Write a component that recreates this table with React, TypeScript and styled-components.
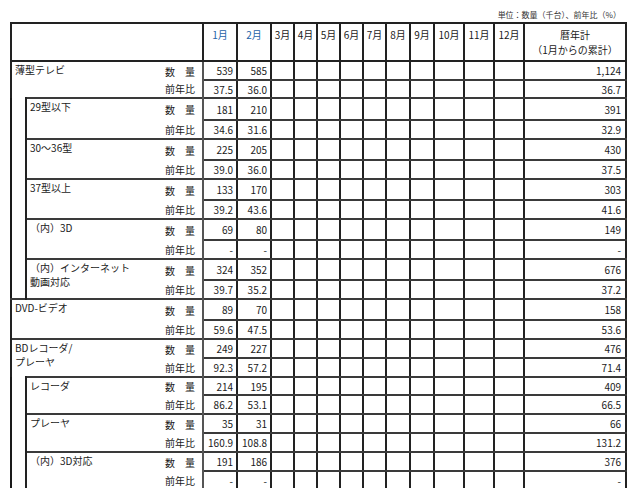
import React from "react";
import styled, { createGlobalStyle } from "styled-components";

const Global = createGlobalStyle`
  html, body { margin: 0; padding: 0; background: #fff; overflow: hidden; }
  body { font-family: "Noto Sans CJK JP", "Noto Sans", sans-serif; color: #1a1a1a; }
`;

const Page = styled.div`
  padding-left: 10px;
  width: 615px;
`;

const UnitNote = styled.div`
  height: 22px;
  display: flex;
  align-items: flex-end;
  justify-content: flex-end;
  padding-right: 4px;
  box-sizing: border-box;
  padding-bottom: 3px;
  font-size: 8px;
  line-height: 9px;
  color: #333;
`;

const Sheet = styled.table`
  width: 615px;
  table-layout: fixed;
  border-collapse: collapse;
  border: 2px solid #1a1a1a;
  font-size: 10px;
`;

const line = "2px solid #3a3a3a";
const vline = "2px solid #222";

const HeadCell = styled.th<{ $blue?: boolean }>`
  border: ${vline};
  padding: 3px 0 0;
  vertical-align: top;
  font-weight: normal;
  line-height: 15px;
  text-align: center;
  white-space: nowrap;
  color: ${(p) => (p.$blue ? "#2563a8" : "#1a1a1a")};
`;

const IndentCell = styled.td`
  border-top: none;
  border-bottom: none;
  border-right: ${vline};
  padding: 0;
`;

const NameCell = styled.td`
  border-top: ${line};
  border-bottom: none;
  border-left: ${vline};
  border-right: none;
  vertical-align: top;
  padding: 1px 0 0 3px;
  line-height: 14px;
  white-space: nowrap;
`;

const KindCell = styled.td<{ $first: boolean }>`
  border-top: ${(p) => (p.$first ? line : "none")};
  border-bottom: none;
  border-left: none;
  border-right: 2px solid #555;
  text-align: right;
  padding: 0 7px 0 0;
  white-space: nowrap;
`;

const NumCell = styled.td`
  border-top: ${line};
  border-bottom: ${line};
  border-left: ${vline};
  border-right: ${vline};
  text-align: right;
  padding: 0 3px 0 0;
  white-space: nowrap;
`;

const TotalCell = styled(NumCell)`
  padding-right: 4px;
`;

type Item = {
  name: string[];
  q: [string, string];
  r: [string, string];
  total: [string, string];
  subs?: Item[];
};

const sections: Item[] = [
  {
    name: ["薄型テレビ"],
    q: ["539", "585"],
    r: ["37.5", "36.0"],
    total: ["1,124", "36.7"],
    subs: [
      { name: ["29型以下"], q: ["181", "210"], r: ["34.6", "31.6"], total: ["391", "32.9"] },
      { name: ["30～36型"], q: ["225", "205"], r: ["39.0", "36.0"], total: ["430", "37.5"] },
      { name: ["37型以上"], q: ["133", "170"], r: ["39.2", "43.6"], total: ["303", "41.6"] },
      { name: ["（内）3D"], q: ["69", "80"], r: ["-", "-"], total: ["149", "-"] },
      {
        name: ["（内）インターネット", "動画対応"],
        q: ["324", "352"],
        r: ["39.7", "35.2"],
        total: ["676", "37.2"],
      },
    ],
  },
  { name: ["DVD-ビデオ"], q: ["89", "70"], r: ["59.6", "47.5"], total: ["158", "53.6"] },
  {
    name: ["BDレコーダ/", "プレーヤ"],
    q: ["249", "227"],
    r: ["92.3", "57.2"],
    total: ["476", "71.4"],
    subs: [
      { name: ["レコーダ"], q: ["214", "195"], r: ["86.2", "53.1"], total: ["409", "66.5"] },
      { name: ["プレーヤ"], q: ["35", "31"], r: ["160.9", "108.8"], total: ["66", "131.2"] },
      { name: ["（内）3D対応"], q: ["191", "186"], r: ["-", "-"], total: ["376", "-"] },
    ],
  },
];

const heights = [19, 18, 22, 19, 21, 19, 21, 19, 21, 19, 21, 19, 21, 19, 19, 19, 18, 19, 19, 19, 19, 19];

const months = ["1月", "2月", "3月", "4月", "5月", "6月", "7月", "8月", "9月", "10月", "11月", "12月"];
const widths = [34, 34, 23, 23, 23, 23, 23, 24, 24, 30, 30, 30];

const Name = ({ lines }: { lines: string[] }) => (
  <>
    {lines.map((l, i) => (
      <React.Fragment key={i}>
        {i > 0 && <br />}
        {l}
      </React.Fragment>
    ))}
  </>
);

export default function App() {
  let rowIndex = 0;
  const rows: React.ReactNode[] = [];

  const pushItem = (item: Item, sub: boolean, indentSpan: number) => {
    const h1 = heights[rowIndex++] ?? 19;
    const h2 = heights[rowIndex++] ?? 19;
    const key = item.name.join("");
    rows.push(
      <tr key={key + "q"} style={{ height: h1 }}>
        {indentSpan > 0 && <IndentCell rowSpan={indentSpan} />}
        <NameCell rowSpan={2} colSpan={sub ? 1 : 2}>
          <Name lines={item.name} />
        </NameCell>
        <KindCell $first>数　量</KindCell>
        <NumCell>{item.q[0]}</NumCell>
        <NumCell>{item.q[1]}</NumCell>
        {months.slice(2).map((m) => (
          <NumCell key={m} />
        ))}
        <TotalCell>{item.total[0]}</TotalCell>
      </tr>
    );
    rows.push(
      <tr key={key + "r"} style={{ height: h2 }}>
        <KindCell $first={false}>前年比</KindCell>
        <NumCell>{item.r[0]}</NumCell>
        <NumCell>{item.r[1]}</NumCell>
        {months.slice(2).map((m) => (
          <NumCell key={m} />
        ))}
        <TotalCell>{item.total[1]}</TotalCell>
      </tr>
    );
  };

  sections.forEach((s) => {
    pushItem(s, false, 0);
    (s.subs ?? []).forEach((c, i) => {
      pushItem(c, true, i === 0 ? s.subs!.length * 2 : 0);
    });
  });

  return (
    <Page>
      <Global />
      <UnitNote>単位：数量（千台）、前年比（%）</UnitNote>
      <Sheet>
        <colgroup>
          <col style={{ width: 15 }} />
          <col style={{ width: 125 }} />
          <col style={{ width: 52 }} />
          {widths.map((w, i) => (
            <col key={i} style={{ width: w }} />
          ))}
          <col style={{ width: 102 }} />
        </colgroup>
        <thead>
          <tr style={{ height: 38 }}>
            <HeadCell colSpan={3} />
            {months.map((m, i) => (
              <HeadCell key={m} $blue={i < 2}>
                {m}
              </HeadCell>
            ))}
            <HeadCell>
              暦年計
              <br />
              （1月からの累計）
            </HeadCell>
          </tr>
        </thead>
        <tbody>{rows}</tbody>
      </Sheet>
    </Page>
  );
}
